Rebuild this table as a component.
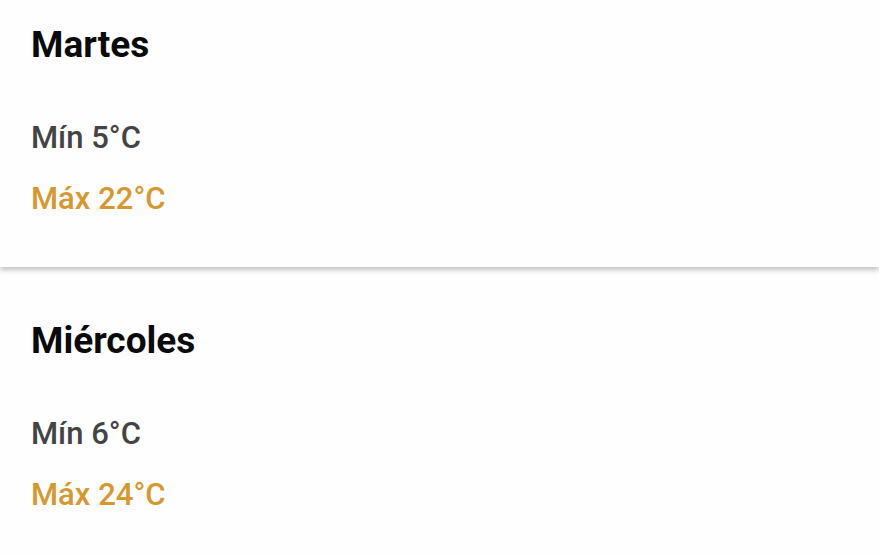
export default function App() {
  const days = [
    { name: "Martes", min: 5, max: 22 },
    { name: "Miércoles", min: 6, max: 24 },
  ];
  return (
    <div className="w-[879px] h-[556px] overflow-hidden bg-[#fefefe]" style={{ fontFamily: "Roboto, 'Noto Sans', sans-serif" }}>
      {days.map((d, i) => (
        <div key={d.name} className={`bg-[#fefefe] pl-[31px] pt-[23px] ${i === 0 ? "pb-[50px] shadow-[0_3px_5px_rgba(0,0,0,0.24)] mb-[29px]" : ""}`}>
          <div className="text-[37px] font-bold leading-[44px] text-[#0a0a0a]">{d.name}</div>
          <div className="mt-[53px] text-[31px] font-medium leading-[36px] text-[#444444]">Mín {d.min}°C</div>
          <div className="mt-[25px] text-[31px] font-medium leading-[36px] text-[#d6982f]">Máx {d.max}°C</div>
        </div>
      ))}
    </div>
  );
}
